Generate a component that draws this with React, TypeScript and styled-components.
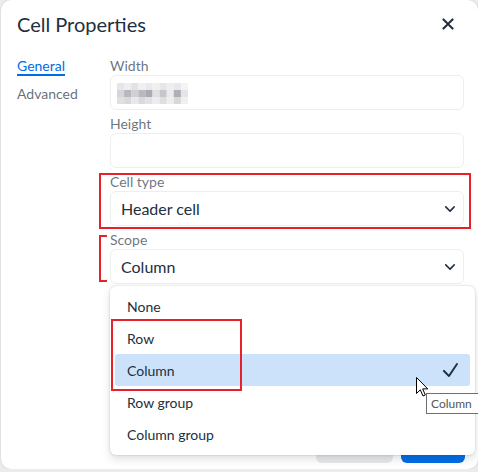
import React from "react";
import styled, { createGlobalStyle } from "styled-components";

const Global = createGlobalStyle`
  html, body { margin: 0; padding: 0; overflow: hidden; }
  body {
    background: #ececec;
    font-family: Lato, "Open Sans", sans-serif;
    color: #222f3e;
  }
  * { box-sizing: border-box; }
`;

const Dialog = styled.div`
  position: relative;
  margin-left: 1px;
  width: 477px;
  height: 469px;
  background: #fff;
  border-radius: 10px;
  box-shadow: 0 0 2px rgba(34, 47, 62, 0.2);
  display: flex;
  flex-direction: column;
`;

const Header = styled.div`
  height: 48px;
  padding: 0 18px 0 16px;
  display: flex;
  align-items: center;
  justify-content: space-between;
`;

const Title = styled.h1`
  margin: 0;
  font-size: 20px;
  font-weight: 400;
  line-height: 28px;
  color: #222f3e;
`;

const CloseButton = styled.button`
  width: 24px;
  height: 24px;
  padding: 0;
  border: 0;
  background: none;
  display: flex;
  color: #222f3e;
`;

const Body = styled.div`
  flex: 1;
  display: grid;
  grid-template-columns: 93px 1fr;
  padding: 4px 14px 0 16px;
  align-content: start;
`;

const Tabs = styled.div`
  display: flex;
  flex-direction: column;
  align-items: flex-start;
  gap: 4px;
`;

const Tab = styled.div<{ $active?: boolean }>`
  font-size: 14px;
  line-height: 17px;
  padding-top: 5px;
  color: ${(p) => (p.$active ? "#006ce7" : "rgba(34,47,62,0.7)")};
  border-bottom: 2px solid ${(p) => (p.$active ? "#006ce7" : "transparent")};
`;

const Form = styled.div`
  display: flex;
  flex-direction: column;
`;

const Field = styled.div`
  display: flex;
  flex-direction: column;
`;

const Label = styled.label`
  font-size: 14px;
  line-height: 18px;
  padding-top: 5px;
  color: rgba(34, 47, 62, 0.68);
`;

const Box = styled.div`
  height: 35px;
  border: 1px solid #eeeeee;
  border-radius: 6px;
  background: #fff;
  display: flex;
  align-items: center;
  padding: 0 8px 0 10px;
  justify-content: space-between;
`;

const MosaicBox = styled(Box)`
  padding-left: 6px;
  padding-top: 2px;
`;

const SelectText = styled.span`
  font-size: 16px;
  color: #222f3e;
`;

const Footer = styled.div`
  display: flex;
  justify-content: flex-end;
  gap: 8px;
  padding: 0 13px 6px 0;
`;

const Button = styled.button<{ $primary?: boolean }>`
  height: 34px;
  width: ${(p) => (p.$primary ? "64px" : "77px")};
  border: 0;
  border-radius: 6px;
  font-family: inherit;
  font-size: 14px;
  font-weight: 700;
  background: ${(p) => (p.$primary ? "#006ce7" : "#e8e9ea")};
  color: ${(p) => (p.$primary ? "#fff" : "#222f3e")};
`;

const Menu = styled.div`
  position: absolute;
  left: 109px;
  top: 286px;
  width: 365px;
  height: 169px;
  background: #fff;
  border-radius: 6px;
  box-shadow: 0 0 2px rgba(34, 47, 62, 0.25), 0 4px 8px rgba(34, 47, 62, 0.15);
  padding: 4px 5px 5px;
  display: flex;
  flex-direction: column;
`;

const Item = styled.div<{ $active?: boolean }>`
  height: 32px;
  flex: none;
  display: flex;
  align-items: center;
  justify-content: space-between;
  padding: 0 8px 0 12px;
  border-radius: 3px;
  font-size: 14px;
  color: #222f3e;
  background: ${(p) => (p.$active ? "#cce2fa" : "transparent")};
`;

const RedBox = styled.div<{ $l: number; $t: number; $w: number; $h: number; $bracket?: boolean }>`
  position: absolute;
  left: ${(p) => p.$l}px;
  top: ${(p) => p.$t}px;
  width: ${(p) => p.$w}px;
  height: ${(p) => p.$h}px;
  border: 2px solid #e8202a;
  ${(p) => (p.$bracket ? "border-right: 0;" : "")}
  z-index: 3;
  pointer-events: none;
`;

const Cursor = styled.svg`
  position: absolute;
  left: 414px;
  top: 376px;
  z-index: 4;
`;

const Tooltip = styled.div`
  position: absolute;
  left: 425px;
  top: 393px;
  height: 21px;
  padding: 0 6px 0 4px;
  border: 1px solid #6f6f6f;
  background: #fff;
  font-size: 12px;
  line-height: 19px;
  color: #575757;
  white-space: nowrap;
  z-index: 4;
`;

const Chevron = () => (
  <svg width="10" height="10" viewBox="0 0 10 10">
    <path
      fill="#222f3e"
      d="M8.7 2.2c.3-.3.8-.3 1 0 .4.4.4.9 0 1.2L5.7 7.8c-.3.3-.9.3-1.2 0L.2 3.4a.8.8 0 0 1 0-1.2c.3-.3.8-.3 1.1 0L5 6l3.7-3.8Z"
    />
  </svg>
);

const mosaic = [
  ["#e6e6e8", "#eeeef0", "#e2e2e5", "#f0f0f1", "#e9e9eb", "#f0f0f1", "#e6e6e8", "#eeeef0", "#e8e8ea", "#f3f3f4"],
  ["#d6d6da", "#b7b8bd", "#cfd0d4", "#b9bac0", "#a9abb2", "#e1e1e4", "#c6c7cb", "#ebebed", "#aeb0b6", "#e5e5e7"],
  ["#e0e0e3", "#d9d9dc", "#e9e9eb", "#dadadd", "#e2e2e4", "#ededef", "#dfdfe2", "#eeeeef", "#d8d8db", "#f0f0f1"],
];

const Mosaic = () => (
  <svg width="71" height="21" viewBox="0 0 71 21">
    {mosaic.map((row, r) =>
      row.map((c, i) => <rect key={`${r}-${i}`} x={i * 7.1} y={r * 7} width={7.2} height={7} fill={c} />)
    )}
  </svg>
);

const items = ["None", "Row", "Column", "Row group", "Column group"];

export default function App() {
  return (
    <>
      <Global />
      <Dialog>
        <Header>
          <Title>Cell Properties</Title>
          <CloseButton aria-label="Close">
            <svg width="24" height="24" viewBox="0 0 24 24">
              <path
                fill="currentColor"
                d="M17.3 8.2 13.4 12l3.9 3.8a1 1 0 0 1-1.5 1.5L12 13.4l-3.8 3.9a1 1 0 0 1-1.5-1.5l3.9-3.8-3.9-3.8a1 1 0 0 1 1.5-1.5l3.8 3.9 3.8-3.9a1 1 0 0 1 1.5 1.5Z"
              />
            </svg>
          </CloseButton>
        </Header>
        <Body>
          <Tabs>
            <Tab $active>General</Tab>
            <Tab>Advanced</Tab>
          </Tabs>
          <Form>
            <Field>
              <Label>Width</Label>
              <MosaicBox>
                <Mosaic />
              </MosaicBox>
            </Field>
            <Field>
              <Label>Height</Label>
              <Box />
            </Field>
            <Field>
              <Label>Cell type</Label>
              <Box>
                <SelectText>Header cell</SelectText>
                <Chevron />
              </Box>
            </Field>
            <Field>
              <Label>Scope</Label>
              <Box>
                <SelectText>Column</SelectText>
                <Chevron />
              </Box>
            </Field>
          </Form>
        </Body>
        <Footer>
          <Button>Cancel</Button>
          <Button $primary>Save</Button>
        </Footer>

        <Menu>
          {items.map((it) => (
            <Item key={it} $active={it === "Column"}>
              <span>{it}</span>
              {it === "Column" && (
                <svg width="24" height="24" viewBox="0 0 24 24">
                  <path
                    fill="#222f3e"
                    d="M18.2 5.4a1 1 0 0 1 1.6 1.2l-8 12a1 1 0 0 1-1.5.1l-5-5a1 1 0 1 1 1.4-1.4l4.1 4.1 7.4-11Z"
                  />
                </svg>
              )}
            </Item>
          ))}
        </Menu>

        <RedBox $l={98} $t={173} $w={372} $h={56} />
        <RedBox $l={98} $t={235} $w={8} $h={47} $bracket />
        <RedBox $l={110} $t={319} $w={131} $h={72} />

        <Cursor width="14" height="22" viewBox="0 0 14 22">
          <path
            d="M1.5 1.5 L1.5 17.5 L5.3 13.8 L8 20 L10.3 19 L7.7 12.9 L12.8 12.9 Z"
            fill="#fff"
            stroke="#000"
            strokeWidth="1"
            strokeLinejoin="miter"
          />
        </Cursor>
        <Tooltip>Column</Tooltip>
      </Dialog>
    </>
  );
}
